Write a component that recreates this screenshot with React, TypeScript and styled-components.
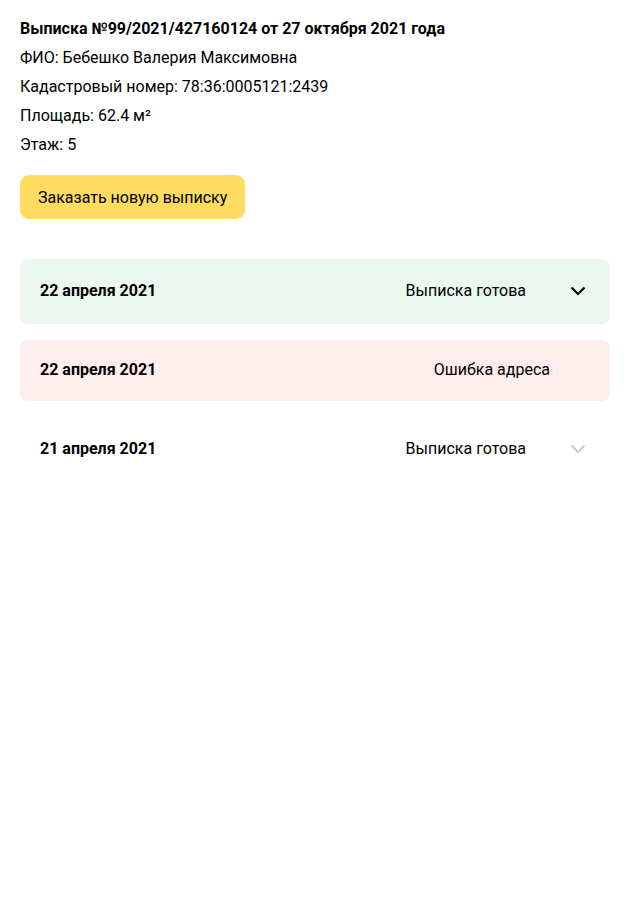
import React from "react";
import styled, { createGlobalStyle } from "styled-components";

const GlobalStyle = createGlobalStyle`
  body {
    margin: 0;
    background: #ffffff;
    font-family: Roboto, "Liberation Sans", sans-serif;
    color: #000000;
  }
`;

const Page = styled.div`
  padding: 14px 20px 20px;
  display: flex;
  flex-direction: column;
`;

const Info = styled.div`
  display: flex;
  flex-direction: column;
`;

const Line = styled.div<{ $bold?: boolean }>`
  font-size: 16px;
  line-height: 29px;
  font-weight: ${p => (p.$bold ? 700 : 400)};
  white-space: nowrap;
`;

const OrderButton = styled.button`
  align-self: flex-start;
  margin-top: 16px;
  height: 44px;
  padding: 0 18px;
  border: none;
  border-radius: 9px;
  background: #ffdc60;
  font-family: Roboto, "Liberation Sans", sans-serif;
  font-size: 16px;
  color: #000000;
  cursor: pointer;
`;

const List = styled.div`
  margin-top: 40px;
  display: flex;
  flex-direction: column;
  gap: 17px;
`;

type Tone = "success" | "error" | "plain";

const tones: Record<Tone, { bg: string; shadow: string }> = {
  success: { bg: "#ebf7ef", shadow: "0 1px 0 rgba(0,0,0,0.06)" },
  error: { bg: "#feeeee", shadow: "0 1px 0 rgba(0,0,0,0.06)" },
  plain: { bg: "transparent", shadow: "none" },
};

const Row = styled.div<{ $tone: Tone }>`
  display: flex;
  align-items: center;
  padding: 20px;
  min-height: 20px;
  border-radius: 8px;
  background: ${p => tones[p.$tone].bg};
  box-shadow: ${p => tones[p.$tone].shadow};
`;

const DateText = styled.div`
  flex: 1;
  font-size: 16px;
  line-height: 20px;
  font-weight: 700;
`;

const Status = styled.div`
  font-size: 16px;
  line-height: 20px;
  margin-right: 40px;
`;

const Chevron = styled.svg<{ $muted?: boolean }>`
  width: 24px;
  height: 24px;
  flex: none;
  color: ${p => (p.$muted ? "#c9c9c9" : "#000000")};
`;

const ChevronIcon = ({ muted }: { muted?: boolean }) => (
  <Chevron $muted={muted} viewBox="0 0 24 24" fill="none">
    <path d="M5.5 8.5L12 15L18.5 8.5" stroke="currentColor" strokeWidth="2.2" />
  </Chevron>
);

const items: { date: string; status: string; tone: Tone; chevron?: "dark" | "muted" }[] = [
  { date: "22 апреля 2021", status: "Выписка готова", tone: "success", chevron: "dark" },
  { date: "22 апреля 2021", status: "Ошибка адреса", tone: "error" },
  { date: "21 апреля 2021", status: "Выписка готова", tone: "plain", chevron: "muted" },
];

export default function App() {
  return (
    <Page>
      <GlobalStyle />
      <Info>
        <Line $bold>Выписка №99/2021/427160124 от 27 октября 2021 года</Line>
        <Line>ФИО: Бебешко Валерия Максимовна</Line>
        <Line>Кадастровый номер: 78:36:0005121:2439</Line>
        <Line>Площадь: 62.4 м²</Line>
        <Line>Этаж: 5</Line>
      </Info>
      <OrderButton>Заказать новую выписку</OrderButton>
      <List>
        {items.map((it, i) => (
          <Row key={i} $tone={it.tone}>
            <DateText>{it.date}</DateText>
            <Status>{it.status}</Status>
            {it.chevron && <ChevronIcon muted={it.chevron === "muted"} />}
          </Row>
        ))}
      </List>
    </Page>
  );
}
